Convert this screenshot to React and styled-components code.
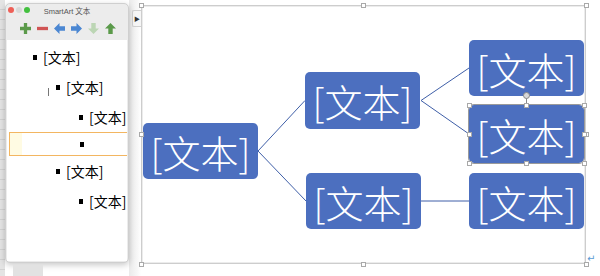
import React from "react";
import styled, { createGlobalStyle } from "styled-components";

const GlobalStyle = createGlobalStyle`
  html, body { margin: 0; padding: 0; background: #fff; }
  body { font-family: "Noto Sans CJK SC", "Liberation Sans", sans-serif; }
`;

const Desktop = styled.div`
  width: 600px;
  height: 276px;
  display: flex;
  overflow: hidden;
  background: #fff;
`;

const Strip = styled.div`
  width: 5px;
  flex: none;
  background: repeating-linear-gradient(#e4e4e4 0 9px, #d2d2d2 9px 10px);
`;

const WindowSlot = styled.div`
  width: 124px;
  flex: none;
  display: flex;
  flex-direction: column;
  position: relative;
  z-index: 2;
`;

const Window = styled.div`
  margin-top: 3px;
  height: 260px;
  box-sizing: border-box;
  background: #ececec;
  border: 1px solid #cfcfcf;
  border-radius: 5px;
  box-shadow: 0 2px 6px rgba(0, 0, 0, 0.22);
  display: flex;
  flex-direction: column;
  overflow: hidden;
`;

const TitleBar = styled.div`
  height: 12px;
  display: flex;
  align-items: center;
  position: relative;
  padding-left: 1.5px;
  gap: 1.5px;
`;

const Light = styled.span`
  width: 6.5px;
  height: 6.5px;
  border-radius: 50%;
  background: ${(p) => p.$c};
`;

const Title = styled.span`
  position: absolute;
  left: 0;
  right: 0;
  text-align: center;
  font-size: 7.5px;
  color: #555;
  font-family: "Liberation Sans", "Noto Sans CJK SC", sans-serif;
`;

const Toolbar = styled.div`
  height: 24px;
  display: flex;
  align-items: center;
  padding-left: 14px;
  gap: 6px;
`;

const List = styled.div`
  flex: 1;
  margin: 0 1px 1px;
  background: #fff;
  padding-top: 2px;
  display: flex;
  flex-direction: column;
`;

const Row = styled.div`
  height: 30px;
  flex: none;
  display: flex;
  align-items: center;
  padding-left: ${(p) => 26 + p.$level * 23}px;
  font-size: 14px;
  color: #000;
  position: relative;
`;

const SelectedRow = styled(Row)`
  height: 24px;
  box-sizing: border-box;
  margin-left: 2px;
  padding-left: ${(p) => 24 + p.$level * 23}px;
  border: 1px solid #f3b661;
  border-right: none;
  background: linear-gradient(90deg, #fffbe3 0 12px, #fff 12px);
`;

const Bullet = styled.span`
  width: 4px;
  height: 5px;
  background: #000;
  margin-right: 6px;
  flex: none;
`;

const Caret = styled.span`
  position: absolute;
  left: 41px;
  top: 16px;
  width: 1px;
  height: 8px;
  background: #777;
`;

const UnderBlock = styled.div`
  margin: 2px 0 0 8px;
  width: 30px;
  flex: 1;
  background: #e2e2e2;
`;

const PageEdge = styled.div`
  width: 12px;
  flex: none;
  background: linear-gradient(90deg, #eaeaea, #f7f7f7 70%, #fff);
  padding-top: 10px;
  display: flex;
  justify-content: flex-end;
`;

const Tab = styled.div`
  width: 8px;
  height: 15px;
  background: #f6f6f6;
  border: 1px solid #d0d0d0;
  border-right: none;
  border-radius: 2px 0 0 2px;
  display: flex;
  align-items: center;
  justify-content: center;
  font-size: 6px;
  color: #333;
`;

const Frame = styled.div`
  margin-top: 5px;
  width: 445px;
  height: 259px;
  flex: none;
  box-sizing: border-box;
  border: 1px solid #cdcdcd;
  box-shadow: inset 0 0 0 1px #ececec;
  position: relative;
`;

const Node = styled.div`
  position: absolute;
  left: ${(p) => p.$x}px;
  top: ${(p) => p.$y}px;
  width: ${(p) => p.$w || 115}px;
  height: ${(p) => p.$h || 56}px;
  background: #4c6fbf;
  border-radius: 5px;
  display: flex;
  align-items: center;
  justify-content: center;
  color: #fff;
  font-size: 38px;
  font-weight: 300;
  box-sizing: border-box;
  ${(p) => p.$selected && "outline: 1px solid #9a9a9a;"}
`;

const Connectors = styled.svg`
  position: absolute;
  left: -1px;
  top: -1px;
  width: 445px;
  height: 259px;
  overflow: visible;
`;

const Handle = styled.span`
  position: absolute;
  left: ${(p) => p.$x - 2.5}px;
  top: ${(p) => p.$y - 2.5}px;
  width: 5px;
  height: 5px;
  box-sizing: border-box;
  background: #fff;
  border: 1px solid #a9a9a9;
  z-index: 3;
`;

const RotateHandle = styled.span`
  position: absolute;
  left: ${(p) => p.$x - 3.5}px;
  top: ${(p) => p.$y - 3.5}px;
  width: 7px;
  height: 7px;
  box-sizing: border-box;
  border-radius: 50%;
  background: #d8d8d8;
  border: 1px solid #888;
  z-index: 3;
`;

const ReturnMark = styled.span`
  align-self: flex-end;
  margin: 0 0 12px 1px;
  color: #5b9bd5;
  font-size: 10px;
  font-family: "DejaVu Sans", sans-serif;
`;

const Icon = ({ kind }) => {
  const shapes = {
    plus: <path d="M3.5 0h3v3.5H10v3H6.5V10h-3V6.5H0v-3h3.5z" fill="#5b9a4a" />,
    minus: <rect x="0" y="3.5" width="10" height="3" fill="#d05454" />,
    left: <polygon points="0,5 5,0 5,3 10,3 10,7 5,7 5,10" fill="#4b87d2" />,
    right: <polygon points="10,5 5,0 5,3 0,3 0,7 5,7 5,10" fill="#4b87d2" />,
    down: <polygon points="5,10 0,5 3,5 3,0 7,0 7,5 10,5" fill="#bcd6b4" />,
    up: <polygon points="5,0 0,5 3,5 3,10 7,10 7,5 10,5" fill="#5b9a4a" />,
  };
  return (
    <svg width="11" height="11" viewBox="0 0 10 10">
      {shapes[kind]}
    </svg>
  );
};

const rows = [
  { level: 0, text: "[文本]" },
  { level: 1, text: "[文本]", caret: true },
  { level: 2, text: "[文本]" },
  { level: 2, text: "", selected: true },
  { level: 1, text: "[文本]" },
  { level: 2, text: "[文本]" },
];

const nodes = [
  { x: 1, y: 117 },
  { x: 163, y: 66, h: 57 },
  { x: 164, y: 167 },
  { x: 327, y: 34 },
  { x: 327, y: 99, h: 58, selected: true },
  { x: 327, y: 167 },
];

const frameHandles = [
  [0, 0], [222, 0], [445, 0],
  [0, 129], [445, 129],
  [0, 259], [222, 259], [445, 259],
];

const sel = { x: 327, y: 99, w: 115, h: 58 };
const selHandles = [
  [sel.x, sel.y], [sel.x + sel.w / 2, sel.y], [sel.x + sel.w, sel.y],
  [sel.x, sel.y + sel.h / 2], [sel.x + sel.w, sel.y + sel.h / 2],
  [sel.x, sel.y + sel.h], [sel.x + sel.w / 2, sel.y + sel.h], [sel.x + sel.w, sel.y + sel.h],
];

export default function App() {
  return (
    <>
      <GlobalStyle />
      <Desktop>
        <Strip />
        <WindowSlot>
          <Window>
            <TitleBar>
              <Light $c="#ee5f57" />
              <Light $c="#d8d8d8" />
              <Light $c="#43c03f" />
              <Title>SmartArt 文本</Title>
            </TitleBar>
            <Toolbar>
              {["plus", "minus", "left", "right", "down", "up"].map((k) => (
                <Icon key={k} kind={k} />
              ))}
            </Toolbar>
            <List>
              {rows.map((r, i) => {
                const R = r.selected ? SelectedRow : Row;
                return (
                  <R key={i} $level={r.level}>
                    {r.caret && <Caret />}
                    <Bullet />
                    {r.text}
                  </R>
                );
              })}
            </List>
          </Window>
          <UnderBlock />
        </WindowSlot>
        <PageEdge>
          <Tab>▶</Tab>
        </PageEdge>
        <Frame>
          <Connectors viewBox="0 0 445 259">
            <g stroke="#3f5fa8" strokeWidth="1" fill="none">
              <path d="M117 146 L164 95.5" />
              <path d="M117 146 L165 196" />
              <path d="M280 95.5 L328 63" />
              <path d="M280 95.5 L328 129" />
              <path d="M280 196 L328 196" />
            </g>
            <line x1={sel.x + sel.w / 2 + 1} y1={sel.y - 8} x2={sel.x + sel.w / 2 + 1} y2={sel.y + 1} stroke="#888" strokeWidth="1" />
          </Connectors>
          {nodes.map((n, i) => (
            <Node key={i} $x={n.x} $y={n.y} $h={n.h} $selected={n.selected}>
              [文本]
            </Node>
          ))}
          {frameHandles.map(([x, y], i) => (
            <Handle key={"f" + i} $x={x - 1} $y={y - 1} />
          ))}
          {selHandles.map(([x, y], i) => (
            <Handle key={"s" + i} $x={x} $y={y} />
          ))}
          <RotateHandle $x={sel.x + sel.w / 2} $y={sel.y - 10} />
        </Frame>
        <ReturnMark>↵</ReturnMark>
      </Desktop>
    </>
  );
}
